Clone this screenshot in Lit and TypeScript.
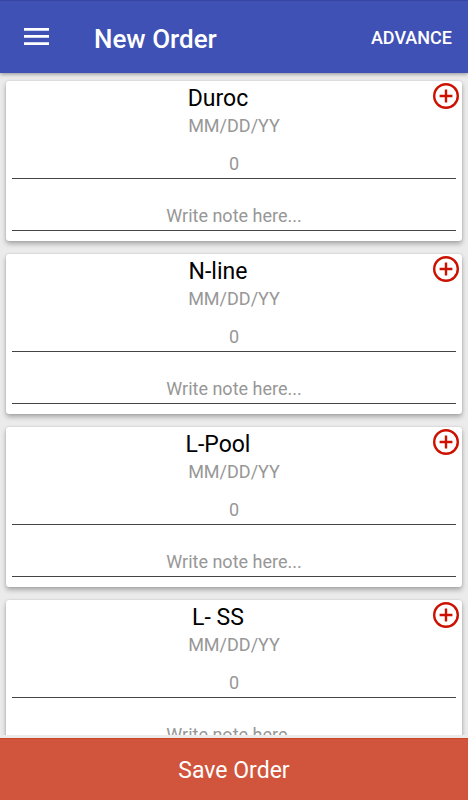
import { LitElement, html, css } from "lit";
import { customElement, property } from "lit/decorators.js";

@customElement("order-card")
class OrderCard extends LitElement {
  @property() name = "";

  static styles = css`
    :host {
      display: block;
      box-sizing: border-box;
      padding: 0 6px 10px;
      background: #fff;
      border-radius: 3px;
      box-shadow: 0 3px 5px rgba(0, 0, 0, 0.28), 0 0 2px rgba(0, 0, 0, 0.16);
    }
    .head {
      display: flex;
      align-items: flex-start;
      height: 34px;
      margin: 0 -4px 0 -8px;
    }
    .title {
      flex: 1;
      margin: 0;
      font-size: 23px;
      font-weight: 400;
      line-height: 36px;
      text-align: center;
      color: #000;
    }
    .add {
      display: block;
      flex: none;
      width: 28px;
      height: 28px;
      margin-top: 1px;
      padding: 0;
      border: 0;
      background: none;
    }
    .add svg {
      display: block;
    }
    .field {
      display: block;
      box-sizing: border-box;
      width: 100%;
      margin: 0;
      padding: 0;
      border: 0;
      border-radius: 0;
      outline: 0;
      background: none;
      color: #222;
      font-family: inherit;
      font-size: 18px;
      line-height: 22px;
      text-align: center;
    }
    .field::placeholder {
      color: #979797;
      opacity: 1;
    }
    .date {
      height: 22px;
    }
    .lined {
      padding-bottom: 4px;
      border-bottom: 1px solid #444;
    }
    .count {
      height: 42px;
      padding-top: 15px;
    }
    .note {
      height: 52px;
      padding-top: 25px;
    }
  `;

  render() {
    return html`
      <div class="head">
        <h2 class="title">${this.name}</h2>
        <button class="add" type="button" aria-label="Add ${this.name}">
          <svg width="28" height="28" viewBox="0 0 28 28" fill="none" stroke="#cc1100" stroke-width="2.4">
            <circle cx="14" cy="14" r="11.8" />
            <path d="M14 7.6V20.4M7.6 14H20.4" />
          </svg>
        </button>
      </div>
      <input class="field date" type="text" placeholder="MM/DD/YY" aria-label="${this.name} date" />
      <input class="field lined count" type="text" inputmode="numeric" placeholder="0" aria-label="${this.name} quantity" />
      <input class="field lined note" type="text" placeholder="Write note here..." aria-label="${this.name} note" />
    `;
  }
}

@customElement("app-root")
class AppRoot extends LitElement {
  private items = ["Duroc", "N-line", "L-Pool", "L- SS"];

  static styles = css`
    :host {
      display: flex;
      flex-direction: column;
      height: 100vh;
      background: #ebebeb;
      font-family: Roboto, "Liberation Sans", sans-serif;
    }
    .bar {
      display: flex;
      align-items: center;
      flex: none;
      box-sizing: border-box;
      height: 73px;
      padding: 0 16px 0 24px;
      border-top: 1px solid #3545a0;
      background: #3f51b5;
      color: #fff;
      box-shadow: 0 1px 4px rgba(0, 0, 0, 0.4);
      z-index: 1;
    }
    button {
      margin: 0;
      padding: 0;
      border: 0;
      background: none;
      color: #fff;
      font-family: inherit;
    }
    .menu,
    .menu svg {
      display: block;
    }
    .heading {
      flex: 1;
      margin: 3px 0 0 45px;
      font-size: 26px;
      font-weight: 500;
      line-height: 32px;
    }
    .advance {
      margin-top: 2px;
      font-size: 18px;
      font-weight: 500;
      line-height: 24px;
    }
    .list {
      display: flex;
      flex-direction: column;
      flex: 1;
      min-height: 0;
      gap: 13px;
      box-sizing: border-box;
      padding: 8px 6px;
      overflow-y: auto;
      scrollbar-width: none;
    }
    order-card {
      flex: none;
    }
    .save {
      flex: none;
      height: 62px;
      margin-top: 3px;
      padding-top: 2px;
      border-top: 1px solid #cc4422;
      background: #d1553c;
      font-size: 23px;
      line-height: 32px;
    }
  `;

  render() {
    return html`
      <header class="bar">
        <button class="menu" type="button" aria-label="Menu">
          <svg width="25" height="18" viewBox="0 0 25 18" fill="#fff">
            <path d="M0 0H25V2.7H0zM0 7.1H25V9.8H0zM0 14.2H25V16.9H0z" />
          </svg>
        </button>
        <h1 class="heading">New Order</h1>
        <button class="advance" type="button">ADVANCE</button>
      </header>
      <main class="list">
        ${this.items.map((name) => html`<order-card .name=${name}></order-card>`)}
      </main>
      <button class="save" type="button">Save Order</button>
    `;
  }
}
